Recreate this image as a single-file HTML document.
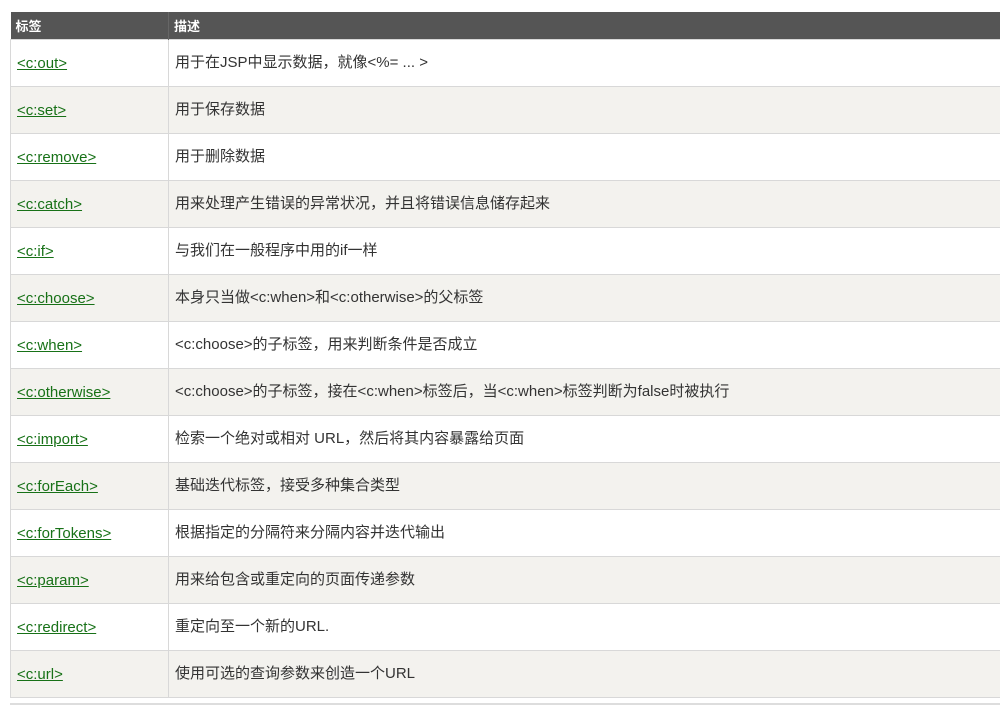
<!DOCTYPE html>
<html><head><meta charset="utf-8"><style>
body{margin:0;background:#fff;font-family:"Liberation Sans","Noto Sans CJK SC",sans-serif;}
table{position:absolute;left:10px;top:12px;width:1000px;border-collapse:collapse;font-size:15px;color:#333;}
th{background:#555;color:#fff;text-align:left;height:27px;padding:0 0 0 5px;font-weight:bold;font-size:13px;border-right:1px solid #666;}
td{height:46px;padding:0 0 0 6px;border:1px solid #d8d8d8;line-height:20px;vertical-align:middle;}
td span,td a{display:inline-block;line-height:20px;vertical-align:middle;}
tr:nth-child(odd) td{background:#f3f2ee;}
tr:nth-child(even) td{background:#fff;}
td:first-child{width:151px;}
a{color:#177117;text-decoration:underline;padding-top:1px;}
.bot{position:absolute;left:10px;top:703px;width:990px;height:2px;background:#ddd;}
</style></head><body>
<table>
<tr><th>标签</th><th>描述</th></tr>
<tr><td><a>&lt;c:out&gt;</a></td><td>用于在JSP中显示数据，就像&lt;%= ... &gt;</td></tr>
<tr><td><a>&lt;c:set&gt;</a></td><td>用于保存数据</td></tr>
<tr><td><a>&lt;c:remove&gt;</a></td><td>用于删除数据</td></tr>
<tr><td><a>&lt;c:catch&gt;</a></td><td>用来处理产生错误的异常状况，并且将错误信息储存起来</td></tr>
<tr><td><a>&lt;c:if&gt;</a></td><td>与我们在一般程序中用的if一样</td></tr>
<tr><td><a>&lt;c:choose&gt;</a></td><td>本身只当做&lt;c:when&gt;和&lt;c:otherwise&gt;的父标签</td></tr>
<tr><td><a>&lt;c:when&gt;</a></td><td>&lt;c:choose&gt;的子标签，用来判断条件是否成立</td></tr>
<tr><td><a>&lt;c:otherwise&gt;</a></td><td>&lt;c:choose&gt;的子标签，接在&lt;c:when&gt;标签后，当&lt;c:when&gt;标签判断为false时被执行</td></tr>
<tr><td><a>&lt;c:import&gt;</a></td><td>检索一个绝对或相对 URL，然后将其内容暴露给页面</td></tr>
<tr><td><a>&lt;c:forEach&gt;</a></td><td>基础迭代标签，接受多种集合类型</td></tr>
<tr><td><a>&lt;c:forTokens&gt;</a></td><td>根据指定的分隔符来分隔内容并迭代输出</td></tr>
<tr><td><a>&lt;c:param&gt;</a></td><td>用来给包含或重定向的页面传递参数</td></tr>
<tr><td><a>&lt;c:redirect&gt;</a></td><td>重定向至一个新的URL.</td></tr>
<tr><td><a>&lt;c:url&gt;</a></td><td>使用可选的查询参数来创造一个URL</td></tr>
</table>
<div class="bot"></div>
</body></html>
